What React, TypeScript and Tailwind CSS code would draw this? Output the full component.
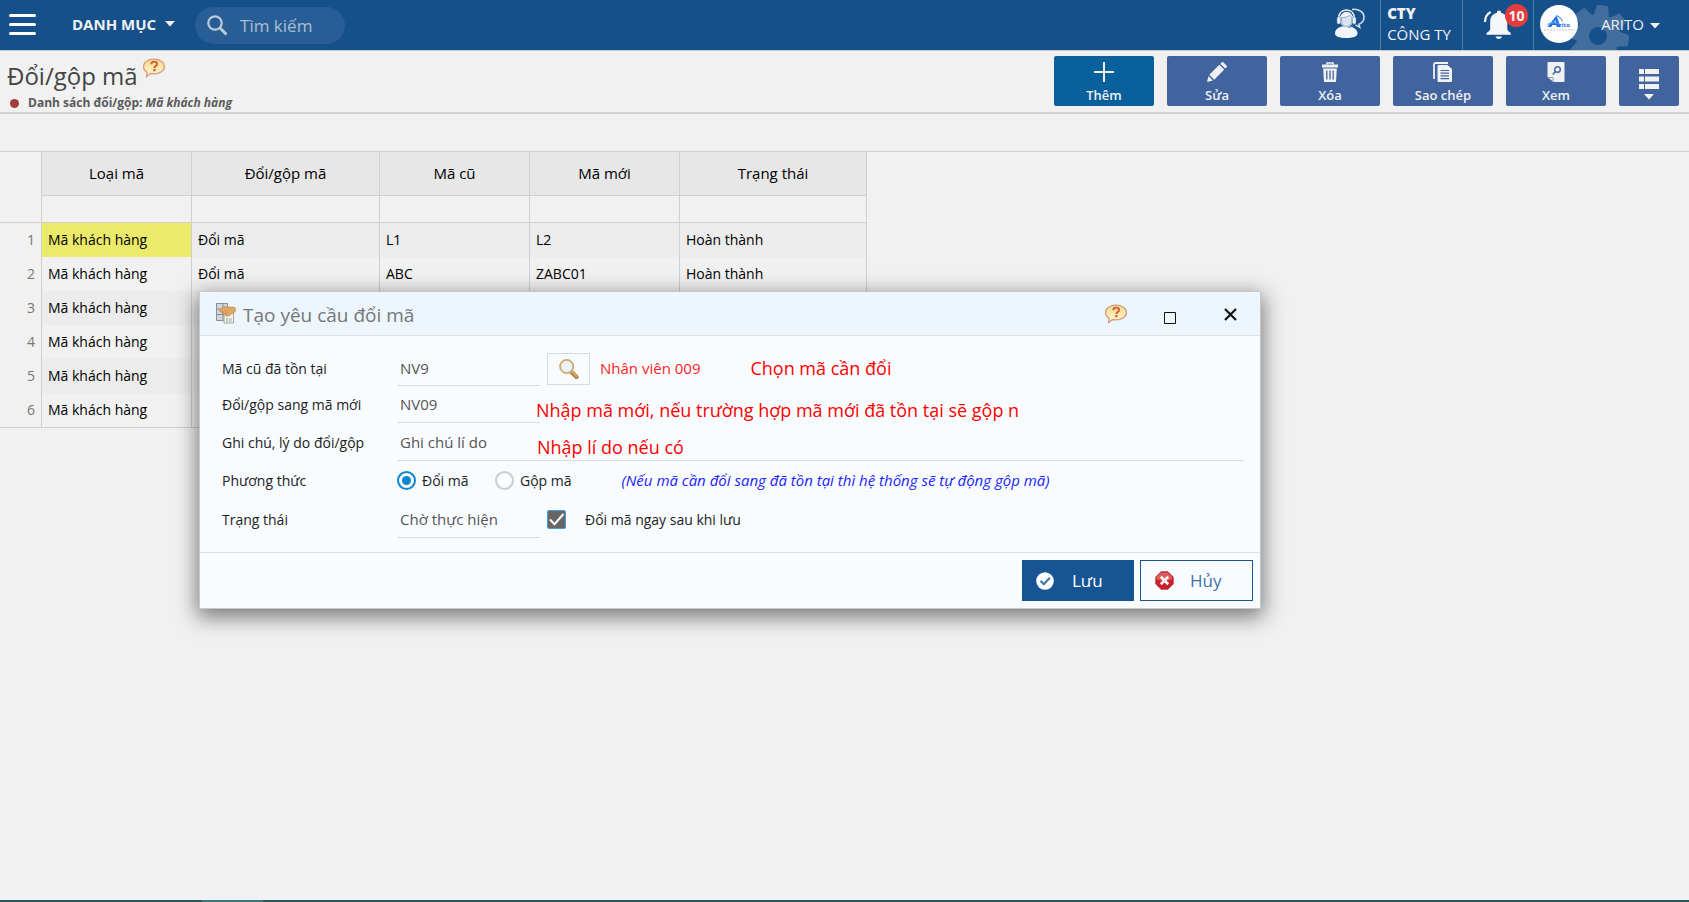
import React, { useState } from "react";

const columns = ["Loại mã", "Đổi/gộp mã", "Mã cũ", "Mã mới", "Trạng thái"];

const rows: string[][] = [
  ["Mã khách hàng", "Đổi mã", "L1", "L2", "Hoàn thành"],
  ["Mã khách hàng", "Đổi mã", "ABC", "ZABC01", "Hoàn thành"],
  ["Mã khách hàng", "", "", "", ""],
  ["Mã khách hàng", "", "", "", ""],
  ["Mã khách hàng", "", "", "", ""],
  ["Mã khách hàng", "", "", "", ""],
];

function Caret({ className = "" }: { className?: string }) {
  return (
    <svg width="10" height="6" viewBox="0 0 10 6" className={className} aria-hidden="true">
      <path d="M0 0h10L5 5.5z" fill="currentColor" />
    </svg>
  );
}

function HelpBubble() {
  return (
    <svg width="24" height="20" viewBox="0 0 24 20" aria-hidden="true">
      <defs>
        <linearGradient id="bubble" x1="0" y1="0" x2="0" y2="1">
          <stop offset="0" stopColor="#f9dc8c" />
          <stop offset="1" stopColor="#fff6cf" />
        </linearGradient>
      </defs>
      <path
        d="M12 1.2c6 0 10.4 3 10.4 7.2 0 4.300-4.400 7.400-10.400 7.400-1.200 0-2.300-.1-3.300-.3L4.500 18.600l.6-4.300C2.800 13 1.600 10.900 1.600 8.400 1.600 4.200 6 1.200 12 1.200z"
        fill="url(#bubble)"
        stroke="#d79a82"
        strokeWidth="1.300"
      />
      <path
        d="M9.300 6.200c0-1.700 1.200-2.600 2.900-2.600 1.600 0 2.800.9 2.800 2.300 0 2-2.600 2-2.600 4"
        fill="none"
        stroke="#cf5a38"
        strokeWidth="1.900"
      />
      <rect x="11.300" y="11" width="2.200" height="2.200" fill="#cf5a38" />
    </svg>
  );
}

function SupportIcon() {
  return (
    <svg width="32" height="32" viewBox="0 0 32 32" aria-hidden="true">
      <path d="M18 1.500c7-.8 12 2.500 12 7.500 0 3.500-2 6-5 7.200l.8 3.300-4.300-2.600" fill="none" stroke="#d5e0eb" strokeWidth="1.500" />
      <path d="M1 25.500c0-4 3-6.500 7.500-7h7c4.500.5 8 3 8 7 0 3-4.500 4.500-11.300 4.500S1 28.500 1 25.500z" fill="#f0f3f7" />
      <ellipse cx="12.500" cy="11.500" rx="6.800" ry="7.800" fill="#f0f3f7" />
      <path d="M4.500 11c0-5.500 3-9 8-9s8 3.500 8 9" fill="none" stroke="#f0f3f7" strokeWidth="1.700" />
      <path d="M7.500 9.500c3 .3 6-.5 8-2.300.6 1.100 1.200 1.700 2.200 2.200v4c0 3-2.200 5-5.200 5s-5-2-5-5z" fill="#dbe4ee" stroke="#5b82aa" strokeWidth=".6" />
      <rect x="3" y="9" width="3.500" height="7" rx="1.500" fill="#f0f3f7" stroke="#5b82aa" strokeWidth=".6" />
      <rect x="18.500" y="9" width="3.500" height="7" rx="1.500" fill="#f0f3f7" stroke="#5b82aa" strokeWidth=".6" />
      <path d="M20 16c-.8 2.200-2.800 3.300-6 3.500" fill="none" stroke="#5b82aa" strokeWidth=".9" />
    </svg>
  );
}

function BellIcon() {
  return (
    <svg width="30" height="32" viewBox="0 0 30 32" aria-hidden="true" fill="#f4f6f8">
      <path d="M16 1.500c1.300 0 2.100.9 2.100 2.200 4 1 6.200 4.200 6.200 8.300v7.500c0 1.700.8 2.700 3.500 4.500v1.700H3.500V24c2.700-1.800 3.700-2.800 3.700-4.500V12c0-4.100 2.700-7.300 6.700-8.300 0-1.300.8-2.200 2.100-2.200z" />
      <path d="M12.500 27.500h6.500c-.4 1.600-1.600 2.500-3.200 2.500s-2.900-.9-3.300-2.500z" />
      <path d="M2 13C2 8.300 4 5 7.700 3" fill="none" stroke="#f4f6f8" strokeWidth="2.300" />
    </svg>
  );
}

function GearIcon() {
  return (
    <svg width="62" height="45" viewBox="0 0 62 45" aria-hidden="true">
      <g fill="#426e9e">
        {[9, 54, 99, 144, 189, 234, 279, 324].map((angle) => (
          <path key={angle} d="M23 12 25.500 0h11L39 12z" transform={`rotate(${angle} 31 31)`} />
        ))}
        <circle cx="31" cy="31" r="22" />
      </g>
      <circle cx="31" cy="31" r="9" fill="#15508a" />
    </svg>
  );
}

function Avatar() {
  return (
    <svg width="38" height="38" viewBox="0 0 38 38" aria-hidden="true">
      <circle cx="19" cy="19" r="19" fill="#fdfdfd" />
      <path d="M7.500 22 16.500 10.500 20.500 22h-3.700l-.5-2h-3.800l-1.300 2z M13.800 17.800h2.200l-.6-3z" fill="#1f6fe0" fillRule="evenodd" />
      <path d="M7.500 19.500c5-2.500 8-2.500 13 .3M16 10.500c3 1 5.500 3 6.500 6" fill="none" stroke="#4d9bf5" strokeWidth="1.100" />
      <text x="19" y="22" fontSize="6" fontWeight="700" fill="#1f6fe0" fontFamily="Open Sans, sans-serif">rito</text>
      <path d="M4 25h31" stroke="#e2e2e2" strokeWidth="2" strokeDasharray="2 1" />
    </svg>
  );
}

const PlusIcon = () => (
  <svg width="20" height="20" viewBox="0 0 20 20" aria-hidden="true">
    <path d="M10 0v20M0 10h20" stroke="#f1f1f1" strokeWidth="2" />
  </svg>
);

const PencilIcon = () => (
  <svg width="20" height="20" viewBox="0 0 20 20" aria-hidden="true" fill="#f1f1f1">
    <path d="M0 20l1.500-6 4.300 4.500z" />
    <path d="M2.300 12.800 12.300 2.700l4.900 4.900L7.200 17.700z" />
    <path d="M13.300 1.700 14.800.4c.5-.5 1.100-.5 1.600 0l3.200 3.200c.5.500.5 1.100 0 1.600l-1.400 1.400z" />
  </svg>
);

const TrashIcon = () => (
  <svg width="18" height="20" viewBox="0 0 18 20" aria-hidden="true">
    <path d="M6 2.500V1h6v1.500" fill="none" stroke="#f1f1f1" strokeWidth="1.500" />
    <path d="M1 2.500h16v3H1z" fill="#f1f1f1" />
    <path d="M2.200 6.500h13.600L15 20H3z" fill="#f1f1f1" />
    <path d="M5.800 8.500v9M9 8.500v9M12.200 8.500v9" stroke="#42649e" strokeWidth="1.300" />
  </svg>
);

const CopyIcon = () => (
  <svg width="20" height="20" viewBox="0 0 20 20" aria-hidden="true">
    <path d="M15 1H2.500C1.500 1 1 1.500 1 2.500V17" fill="none" stroke="#f1f1f1" strokeWidth="1.800" />
    <path d="M6 3h8.500L19 7v11.500c0 1-.5 1.500-1.500 1.500H6c-1 0-1.500-.5-1.500-1.500v-14C4.500 3.500 5 3 6 3z" fill="#f1f1f1" />
    <path d="M7.500 8.500h8.500M7.500 11.200h8.500M7.500 13.900h8.500M7.500 16.600h8.500" stroke="#42649e" strokeWidth="1.200" />
  </svg>
);

const ViewIcon = () => (
  <svg width="18" height="20" viewBox="0 0 18 20" aria-hidden="true">
    <path d="M1.500 0h15c.6 0 1 .4 1 1v18c0 .6-.4 1-1 1H6.500L.5 15V1c0-.6.4-1 1-1z" fill="#f1f1f1" />
    <path d="M1.500 15.500H6V20" fill="none" stroke="#8d9fc4" strokeWidth="1" />
    <circle cx="10.500" cy="7.500" r="2.800" fill="none" stroke="#42649e" strokeWidth="1.400" />
    <path d="M8.500 9.500 5.800 12.500" stroke="#42649e" strokeWidth="1.500" />
  </svg>
);

const ListIcon = () => (
  <svg width="20" height="20" viewBox="0 0 20 20" aria-hidden="true" fill="#f1f1f1">
    <path d="M0 0h5v5H0zM6 0h14v5H6zM0 7.500h5v5H0zM6 7.500h14v5H6zM0 15h5v5H0zM6 15h14v5H6z" />
  </svg>
);

function FormIcon() {
  return (
    <svg width="20" height="21" viewBox="0 0 20 21" aria-hidden="true">
      <path d="M.5.5h11v17H.5z" fill="#d3d4d7" stroke="#8d8f94" />
      <path d="M.5 6h11M.5 11.500h11M7 1v16" stroke="#8b8e93" strokeWidth="1" />
      <path d="M8 8.500h9.500v11.500H8z" fill="#f4f4f0" stroke="#a3a3a0" />
      <path d="M10 16h1.500M10 18h1.500" stroke="#3fa34d" strokeWidth="1.200" />
      <path d="M12.500 16h3.500M12.500 18h3.500" stroke="#b0a8a0" strokeWidth="1" />
      <path d="M3.500 8c2-3.500 4.500-4.500 7.500-4l7 .3c1.600.3 2 1.500 1.700 3-.5 2-2.500 2.800-4.500 3.800-1.500 1-2.200 2.800-4 1.700-1.500.5-2.500-.5-2.200-1.800-1.500.3-2.500-.5-2-1.800C5.500 9.500 4.300 9 3.500 8z" fill="#e3a765" stroke="#b97f41" strokeWidth=".7" />
      <path d="M7 9.200l3-2.200M9 11l3-2.300" stroke="#c08747" strokeWidth=".8" />
    </svg>
  );
}

function LookupIcon() {
  return (
    <svg width="20" height="20" viewBox="0 0 20 20" aria-hidden="true">
      <path d="M12 12.500l5.500 5.500" stroke="#b57e42" strokeWidth="4.200" strokeLinecap="round" />
      <path d="M12.500 12.300l5 5" stroke="#dfb57c" strokeWidth="1.500" strokeLinecap="round" />
      <circle cx="7.700" cy="7.500" r="6.600" fill="#eaf3fd" stroke="#d2ab72" strokeWidth="1.900" />
    </svg>
  );
}

const tools = [
  { label: "Thêm", icon: <PlusIcon />, tone: "bg-[#0a609c]" },
  { label: "Sửa", icon: <PencilIcon />, tone: "bg-[#42649e]" },
  { label: "Xóa", icon: <TrashIcon />, tone: "bg-[#42649e]" },
  { label: "Sao chép", icon: <CopyIcon />, tone: "bg-[#42649e]" },
  { label: "Xem", icon: <ViewIcon />, tone: "bg-[#42649e]" },
];

function TopBar() {
  return (
    <header className="flex h-[51px] items-stretch border-b border-[#c4c8cc] bg-[#15508a] text-[#f1f1f1]">
      <div className="flex items-center pb-[2px] pl-[9px]">
        <button type="button" aria-label="Menu" className="flex w-[27px] flex-col gap-[6px]">
          <span className="h-[3px] rounded-sm bg-white" />
          <span className="h-[3px] rounded-sm bg-white" />
          <span className="h-[3px] rounded-sm bg-white" />
        </button>
        <button type="button" className="ml-9 flex items-center gap-[9px] text-[15px] font-bold">
          DANH MỤC
          <Caret />
        </button>
        <label className="mt-[3px] ml-5 flex h-[37px] w-[150px] items-center rounded-full bg-[#285e95] pl-3">
          <svg width="21" height="21" viewBox="0 0 21 21" className="shrink-0" aria-hidden="true">
            <circle cx="8" cy="8" r="6.700" fill="none" stroke="#b9cadb" strokeWidth="2.200" />
            <path d="M12.800 12.800l6.700 6.700" stroke="#b9cadb" strokeWidth="3" />
          </svg>
          <input
            type="text"
            aria-label="Tìm kiếm"
            placeholder="Tìm kiếm"
            className="ml-3 w-24 bg-transparent text-[17px] outline-none placeholder:text-[#a9bfd5]"
          />
        </label>
      </div>
      <div className="ml-auto flex items-stretch">
        <button type="button" aria-label="Hỗ trợ" className="flex items-center px-[14px] pb-[2px]">
          <SupportIcon />
        </button>
        <div className="flex w-[82px] flex-col justify-center border-l border-[#527da9] pb-[2px] pl-[6px] text-[15px] leading-[21px]">
          <strong className="font-extrabold">CTY</strong>
          <span>CÔNG TY</span>
        </div>
        <button type="button" aria-label="Thông báo" className="relative w-[71px] border-l border-[#527da9] pl-5">
          <BellIcon />
          <span className="absolute top-1 right-[5px] flex size-[23px] items-center justify-center rounded-full bg-[#e23c3c] text-[14px] font-bold">
            10
          </span>
        </button>
        <button type="button" className="relative flex items-center border-l border-[#527da9] pr-[29px] pb-[2px] pl-[6px] text-[15px]">
          <span className="absolute bottom-0 left-[33px]">
            <GearIcon />
          </span>
          <span className="relative">
            <Avatar />
          </span>
          <span className="relative ml-[23px]">ARITO</span>
          <Caret className="relative mt-1 ml-[6px]" />
        </button>
      </div>
    </header>
  );
}

function TitleBar() {
  return (
    <div className="flex h-[63px] justify-between border-b-2 border-[#d2d2d2] pr-[10px] pl-[7px]">
      <div>
        <div className="flex">
          <h1 className="pt-[7px] text-[24px] leading-[36px] text-[#444]">Đổi/gộp mã</h1>
          <button type="button" aria-label="Trợ giúp" className="ml-1 self-start pt-[7px]">
            <HelpBubble />
          </button>
        </div>
        <p className="flex items-center text-[12px] leading-[18px] font-bold text-[#5a5a5a]">
          <span className="mr-[9px] ml-[3px] size-[9px] rounded-full bg-[#a33c3c]" />
          Danh sách đổi/gộp:&nbsp;<em>Mã khách hàng</em>
        </p>
      </div>
      <div className="flex gap-[13px] pt-[5px]">
        {tools.map((tool) => (
          <button
            key={tool.label}
            type="button"
            className={`flex h-[50px] w-[100px] flex-col items-center rounded-[2px] pt-[6px] text-[13px] leading-[18px] font-semibold text-[#f1f1f1] ${tool.tone}`}
          >
            {tool.icon}
            <span className="pt-1">{tool.label}</span>
          </button>
        ))}
        <button
          type="button"
          aria-label="Tùy chọn"
          className="flex h-[50px] w-[60px] flex-col items-center gap-[5px] rounded-[2px] bg-[#42649e] pt-[13px] text-[#f1f1f1]"
        >
          <ListIcon />
          <Caret />
        </button>
      </div>
    </div>
  );
}

function DataTable() {
  const line = "border-r border-[#cfcfcf]";
  return (
    <div className="mt-[37px] border-t border-[#cfcfcf]">
      <table className="w-[867px] table-fixed border-separate border-spacing-0 text-[14px]">
        <colgroup>
          <col className="w-[42px]" />
          <col className="w-[150px]" />
          <col className="w-[188px]" />
          <col className="w-[150px]" />
          <col className="w-[150px]" />
          <col className="w-[187px]" />
        </colgroup>
        <thead>
          <tr className="h-[44px]">
            <th className={line} aria-label="STT" />
            {columns.map((name) => (
              <th key={name} className={`${line} border-b bg-[#e7e7e7] text-[15px] font-medium text-black`}>
                {name}
              </th>
            ))}
          </tr>
          <tr className="h-[27px]">
            <td className={`${line} border-b`} />
            {columns.map((name) => (
              <td key={name} className={`${line} border-b`}>
                <input aria-label={`Lọc ${name}`} className="block h-5 w-full bg-transparent px-[6px] outline-none" />
              </td>
            ))}
          </tr>
        </thead>
        <tbody>
          {rows.map((row, r) => (
            <tr key={r} className={r === rows.length - 1 ? "h-[35px]" : "h-[34px]"}>
              <td className={`${line} pr-[6px] pb-[2px] text-right text-[#777] ${r === rows.length - 1 ? "border-b" : ""}`}>{r + 1}</td>
              {row.map((value, c) => (
                <td
                  key={c}
                  className={`${line} pb-[2px] pl-[6px] text-black ${r === rows.length - 1 ? "border-b" : ""} ${
                    r === 0 && c === 0 ? "bg-[#ebea6b]" : r % 2 === 0 ? "bg-[#ececec]" : ""
                  }`}
                >
                  {value}
                </td>
              ))}
            </tr>
          ))}
        </tbody>
      </table>
    </div>
  );
}

const field = "border-b border-[#d9dadc] bg-transparent pl-[3px] text-[15px] text-[#555] outline-none";

function Dialog() {
  const [method, setMethod] = useState("doi");
  const [immediate, setImmediate] = useState(true);
  const radio =
    "size-[19px] appearance-none rounded-full border-2 border-[#ccc] bg-white bg-clip-content p-[3px] checked:border-[#0f86cd] checked:bg-[#0f86cd]";
  return (
    <section
      role="dialog"
      aria-labelledby="dialog-title"
      className="absolute top-[291px] left-[199px] w-[1062px] border border-[#c6c9cc] bg-[#f8fcff] text-[14px] text-[#222] shadow-[0_6px_20px_2px_rgba(0,0,0,0.5)]"
    >
      <div className="flex h-[44px] items-center border-b border-[#dfe2e5] bg-[#edf6fd] pl-4">
        <FormIcon />
        <h2 id="dialog-title" className="ml-[7px] pt-[3px] text-[19px] text-[#777]">
          Tạo yêu cầu đổi mã
        </h2>
        <button type="button" aria-label="Trợ giúp" className="ml-auto">
          <HelpBubble />
        </button>
        <button type="button" aria-label="Phóng to" className="mt-2 ml-9">
          <svg width="12" height="12" viewBox="0 0 12 12" aria-hidden="true">
            <path d="M.5.5h11v11H.5z" fill="none" stroke="#111" />
          </svg>
        </button>
        <button type="button" aria-label="Đóng" className="mr-[23px] ml-[48px] pt-[2px]">
          <svg width="13" height="13" viewBox="0 0 13 13" aria-hidden="true">
            <path d="M1 1l11 11M12 1L1 12" stroke="#111" strokeWidth="2.200" />
          </svg>
        </button>
      </div>

      <form className="grid grid-cols-[175px_1fr] pt-[14px] pr-4 pl-[22px]" onSubmit={(e) => e.preventDefault()}>
        <label htmlFor="old-code" className="flex h-9 items-center">Mã cũ đã tồn tại</label>
        <div className="flex h-9 items-start">
          <input id="old-code" defaultValue="NV9" className={`h-9 w-[143px] ${field}`} />
          <button type="button" aria-label="Tìm mã" className="mt-[3px] ml-[7px] flex h-8 w-[43px] items-center justify-center border border-[#d9dadc]">
            <LookupIcon />
          </button>
          <span className="ml-[10px] text-[15px] leading-9 text-[#f22]">Nhân viên 009</span>
          <span className="ml-[50px] text-[18px] leading-9 text-[#f00]">Chọn mã cần đổi</span>
        </div>

        <label htmlFor="new-code" className="flex h-[37px] items-center">Đổi/gộp sang mã mới</label>
        <div className="flex h-[37px] items-start">
          <input id="new-code" defaultValue="NV09" className={`h-[37px] w-[143px] ${field}`} />
          <span className="-ml-1 pt-[6px] text-[18px] leading-9 text-[#f00]">
            Nhập mã mới, nếu trường hợp mã mới đã tồn tại sẽ gộp n
          </span>
        </div>

        <label htmlFor="note" className="flex h-[38px] items-center">Ghi chú, lý do đổi/gộp</label>
        <div className="relative flex h-[38px]">
          <input id="note" defaultValue="Ghi chú lí do" className={`h-[38px] w-full ${field}`} />
          <span className="pointer-events-none absolute top-[6px] left-[140px] text-[18px] leading-9 text-[#f00]">Nhập lí do nếu có</span>
        </div>

        <span className="flex h-[39px] items-center">Phương thức</span>
        <div className="flex h-[39px] items-center">
          <label className="flex w-[98px] items-center gap-[6px]">
            <input type="radio" name="method" className={radio} checked={method === "doi"} onChange={() => setMethod("doi")} />
            Đổi mã
          </label>
          <label className="flex items-center gap-[6px]">
            <input type="radio" name="method" className={radio} checked={method === "gop"} onChange={() => setMethod("gop")} />
            Gộp mã
          </label>
          <em className="ml-[50px] text-[15px] text-[#22f]">(Nếu mã cần đổi sang đã tồn tại thì hệ thống sẽ tự động gộp mã)</em>
        </div>

        <label htmlFor="status" className="flex h-[38px] items-center">Trạng thái</label>
        <div className="flex h-[38px] items-center">
          <input id="status" defaultValue="Chờ thực hiện" className={`h-[38px] w-[143px] ${field}`} />
          <label className="ml-[7px] flex items-center">
            <span className="grid size-[19px]">
              <input
                type="checkbox"
                className="col-start-1 row-start-1 size-[19px] appearance-none rounded-[2px] border border-[#4a9bd6] bg-white checked:bg-[#666]"
                checked={immediate}
                onChange={(e) => setImmediate(e.target.checked)}
              />
              {immediate && (
                <svg width="19" height="19" viewBox="0 0 19 19" className="pointer-events-none col-start-1 row-start-1" aria-hidden="true">
                  <path d="M3 9.500l4.500 4.700L16.500 4" fill="none" stroke="#fff" strokeWidth="2" />
                </svg>
              )}
            </span>
            <span className="ml-[19px]">Đổi mã ngay sau khi lưu</span>
          </label>
        </div>
      </form>

      <div className="mt-[14px] flex justify-end gap-[6px] border-t border-[#dfe2e5] px-[7px] py-[7px] text-[17px]">
        <button type="button" className="flex h-[41px] w-[112px] items-center gap-[18px] bg-[#165493] pl-[14px] text-white">
          <svg width="18" height="18" viewBox="0 0 18 18" aria-hidden="true">
            <circle cx="9" cy="9" r="8.800" fill="#fff" />
            <path d="M4.500 8.800l3.300 3.400 6-6.400" fill="none" stroke="#4577a9" strokeWidth="2.300" />
          </svg>
          Lưu
        </button>
        <button type="button" className="flex h-[41px] w-[113px] items-center gap-4 border border-[#165493] bg-[#f8fbff] pl-[14px] text-[#3f72a8]">
          <svg width="19" height="19" viewBox="0 0 19 19" aria-hidden="true">
            <path d="M6 .8h7L18.200 6v7L13 18.200H6L.8 13V6z" fill="#c9202b" stroke="#a3232b" strokeWidth=".8" />
            <path d="M6 1.500h7l4 4v3c-5 1.500-11 1.500-15.500 0V5.500z" fill="#dd5a5e" />
            <path d="M5.800 5.800l7.400 7.400M13.200 5.800l-7.400 7.400" stroke="#f6eeee" strokeWidth="2.800" />
          </svg>
          Hủy
        </button>
      </div>
    </section>
  );
}

export default function App() {
  return (
    <div className="relative flex min-h-screen flex-col bg-[#f1f1f1] font-['Open_Sans','Noto_Sans',sans-serif]">
      <TopBar />
      <TitleBar />
      <DataTable />
      <Dialog />
      <div className="mt-auto flex h-[2px] bg-[#2b545d]">
        <span className="ml-[202px] w-[61px] bg-[#38787f]" />
      </div>
    </div>
  );
}
